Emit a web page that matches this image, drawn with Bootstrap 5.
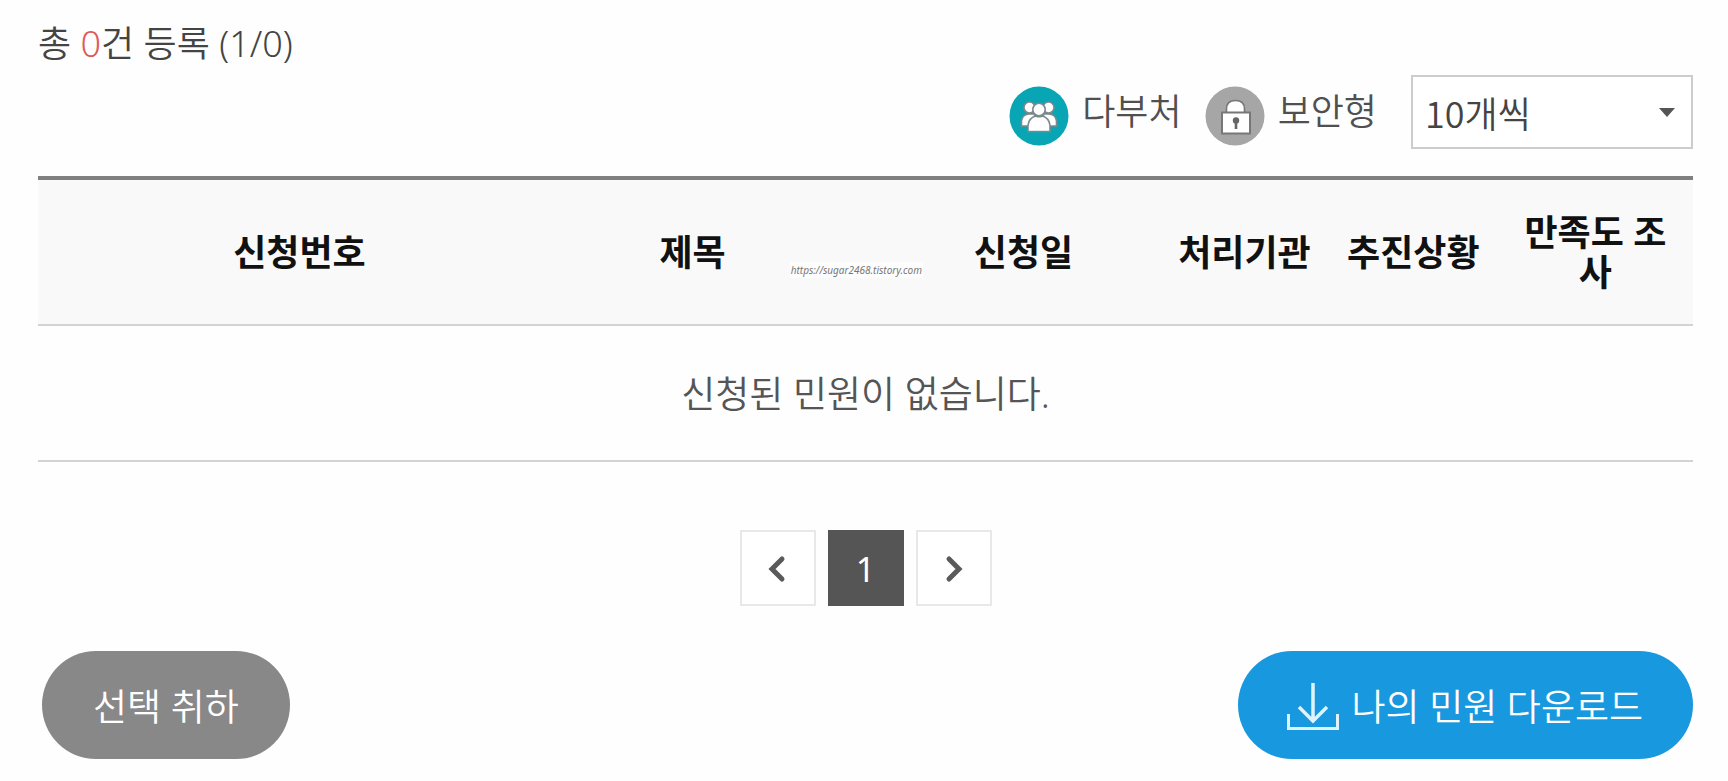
<!DOCTYPE html>
<html lang="ko">
<head>
<meta charset="utf-8">
<meta name="viewport" content="width=device-width, initial-scale=1">
<title>나의 민원</title>
<link href="https://cdn.jsdelivr.net/npm/bootstrap@5.3.0/dist/css/bootstrap.min.css" rel="stylesheet">
<style>
  body { font-family: "Noto Sans", "Noto Sans CJK KR", sans-serif; font-size: 36px; font-weight: 350; line-height: 40px; color: #444; background: #fefefe; }
  .page { padding: 24px 35px 22px 38px; }
  .num { color: #e05a5a; }
  .toolbar { margin-top: 11px; margin-bottom: 27px; }
  .legend { gap: 13px; color: #505050; }
  .legend svg { width: 60px; height: 60px; margin-top: 8px; }
  .legends { gap: 23px; margin-right: 34px; }
  .size-select { width: 282px; height: 74px; padding: 0 56px 0 12px; border: 2px solid #ccc; border-radius: 0; font-family: "Noto Sans CJK KR", sans-serif; font-size: inherit; font-weight: inherit; line-height: 40px; color: #444; background-color: #fff;
    background-image: url("data:image/svg+xml,%3Csvg xmlns='http://www.w3.org/2000/svg' viewBox='0 0 16 10'%3E%3Cpath d='M0 1h16L8 10z' fill='%23555'/%3E%3C/svg%3E"); background-size: 16px 10px; background-position: right 16px center; }
  .petitions { table-layout: fixed; border-top: 4px solid #808080; color: #555; --bs-table-bg: transparent; }
  .petitions > thead { background: #f9f9f9; }
  .petitions > thead > tr > th { padding: 33px 12px 31px; color: #111; font-weight: 700; vertical-align: middle; border-bottom: 2px solid #d3d3d3; word-break: break-all; }
  .petitions > thead > tr > .subject { position: relative; }
  .petitions > tbody > tr > td { padding: 48px 12px 46px; font-size: 37px; color: #555; border-bottom: 2px solid #d3d3d3; }
  .source-mark { position: absolute; z-index: 1; right: -36px; bottom: 46px; padding: 0 1px; font: italic 400 10px/16px "Noto Sans", sans-serif; color: #777; background: #fdfdfd; white-space: nowrap; word-break: normal; }
  .pager { gap: 12px; margin-top: 68px; margin-bottom: 45px; }
  .pager .page-item .page-link { width: 76px; height: 76px; margin: 0; padding: 2px 0 0; border: 2px solid #e8e8e8; border-radius: 0; color: #5a5a5a; background: #fff; font-size: 34px; font-weight: 400; }
  .pager .page-item.active .page-link { color: #fff; background: #555; border-color: #555; }
  .pager svg { width: 24px; height: 30px; }
  .pill { height: 108px; padding: 4px 51px 0; border: 0; border-radius: 54px; font-size: 37px; font-weight: inherit; line-height: 40px; color: #fff; }
  .pill-cancel { margin-left: 4px; background: #888; }
  .pill-download { gap: 12px; padding: 4px 50px 0 49px; background: #1898de; }
  .pill-download svg { width: 52px; height: 48px; }
</style>
</head>
<body>
<main class="page">
  <p class="mb-0">총 <span class="num">0</span>건 등록 (1/0)</p>

  <div class="toolbar d-flex justify-content-end align-items-center">
    <div class="legends d-flex">
      <div class="legend d-flex align-items-center">
        <svg viewBox="0 0 60 60" aria-hidden="true">
          <circle cx="30" cy="30" r="29.5" fill="#08a5b4"/>
          <g fill="#fff" stroke="#7c8a8e" stroke-width="1.6">
            <circle cx="20.5" cy="21.5" r="5.5"/><circle cx="39.5" cy="21.5" r="5.5"/>
            <path d="M12.500 40v-5q1-7 8-7h5v12zM47.500 40v-5q-1-7-8-7h-5v12z"/>
            <circle cx="30" cy="23.500" r="6.200"/>
            <path d="M19 45.500v-6q1-8 8-9.500 3 1.600 6 0 7 1.500 8 9.500v6z"/>
          </g>
        </svg>
        <span>다부처</span>
      </div>
      <div class="legend d-flex align-items-center">
        <svg viewBox="0 0 60 60" aria-hidden="true">
          <circle cx="30" cy="30" r="29.5" fill="#a6a6a6"/>
          <path d="M21.500 27v-4q0-8.500 9-8.500t9 8.500v4z" fill="#fff" stroke="#777" stroke-width="1.6"/>
          <rect x="17" y="26.500" width="28" height="21" fill="#fff" stroke="#777" stroke-width="2"/>
          <circle cx="31" cy="34.500" r="3.200" fill="#666"/><path d="M31 35v8" stroke="#666" stroke-width="2.600"/>
        </svg>
        <span>보안형</span>
      </div>
    </div>
    <label for="pageSize" class="visually-hidden">목록 개수</label>
    <select id="pageSize" class="form-select size-select">
      <option selected>10개씩</option>
      <option>20개씩</option>
      <option>30개씩</option>
    </select>
  </div>

  <table class="table petitions text-center align-middle mb-0">
    <colgroup>
      <col style="width:3.8%"><col style="width:24%"><col style="width:23.5%"><col style="width:16.5%"><col style="width:10.2%"><col style="width:10.2%"><col style="width:11.8%">
    </colgroup>
    <thead>
      <tr>
        <th scope="col"></th>
        <th scope="col">신청번호</th>
        <th scope="col" class="subject">제목<span class="source-mark">https://sugar2468.tistory.com</span></th>
        <th scope="col">신청일</th>
        <th scope="col" class="px-0">처리기관</th>
        <th scope="col" class="px-0">추진상황</th>
        <th scope="col">만족도 조사</th>
      </tr>
    </thead>
    <tbody>
      <tr><td colspan="7">신청된 민원이 없습니다.</td></tr>
    </tbody>
  </table>

  <nav aria-label="페이지">
    <ul class="pagination pager justify-content-center">
      <li class="page-item"><a class="page-link d-flex align-items-center justify-content-center" href="#" aria-label="이전"><svg viewBox="0 0 24 30" fill="none" stroke="currentColor" stroke-width="5" stroke-linecap="round" aria-hidden="true"><path d="M16 5L6 15l10 10"/></svg></a></li>
      <li class="page-item active" aria-current="page"><a class="page-link d-flex align-items-center justify-content-center" href="#">1</a></li>
      <li class="page-item"><a class="page-link d-flex align-items-center justify-content-center" href="#" aria-label="다음"><svg viewBox="0 0 24 30" fill="none" stroke="currentColor" stroke-width="5" stroke-linecap="round" aria-hidden="true"><path d="M7 5l10 10L7 25"/></svg></a></li>
    </ul>
  </nav>

  <div class="d-flex justify-content-between">
    <button type="button" class="btn pill pill-cancel">선택 취하</button>
    <button type="button" class="btn pill pill-download d-flex align-items-center">
      <svg viewBox="0 0 52 48" fill="none" stroke="#dff3ff" stroke-width="3.5" aria-hidden="true"><path d="M26 0v37M12 24l14 14 14-14"/><path d="M1.500 31v14.500h49V31" stroke-width="3"/></svg>
      <span>나의 민원 다운로드</span>
    </button>
  </div>
</main>
<script src="https://cdn.jsdelivr.net/npm/bootstrap@5.3.0/dist/js/bootstrap.bundle.min.js"></script>
</body>
</html>
